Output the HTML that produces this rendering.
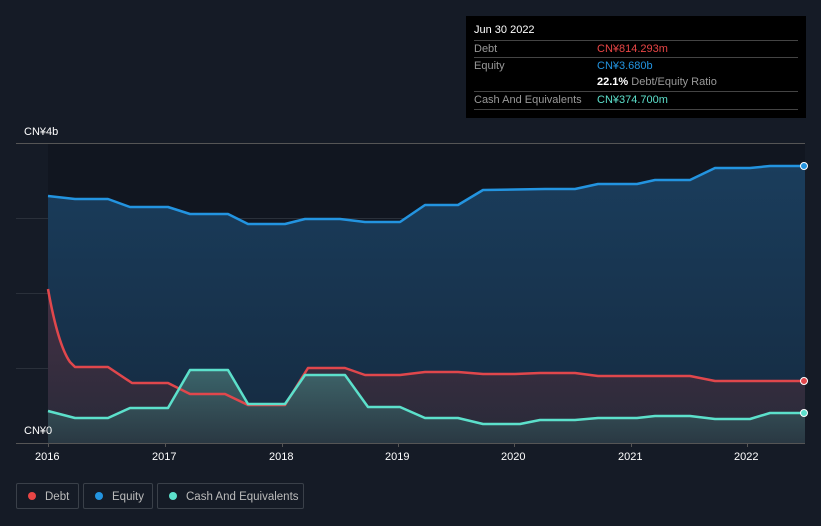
<!DOCTYPE html>
<html><head><meta charset="utf-8"><style>
body{margin:0;width:821px;height:526px;background:#151b26;font-family:"Liberation Sans",sans-serif;overflow:hidden;position:relative}
.tt{position:absolute;left:466px;top:16px;width:340px;height:102px;background:#000;color:#fff;font-size:11px}
.row{position:absolute;left:8px;width:324px;border-top:1px solid #444;height:17px;line-height:17px}
.l{color:#999;position:absolute;left:0}
.v{position:absolute;left:123px}
.leg{position:absolute;top:483px;height:26px;border:1px solid #3a4049;border-radius:2px;color:#bbb;font-size:11.5px;line-height:26px;box-sizing:border-box}
.dot{display:inline-block;width:8px;height:8px;border-radius:50%;margin:0 9px 0 11px;vertical-align:-0px}
.ax{position:absolute;color:#fff;font-size:11px}
</style></head><body>
<svg width="821" height="526" style="position:absolute;left:0;top:0">
<defs>
<linearGradient id="eq" x1="0" y1="0" x2="0" y2="1"><stop offset="0" stop-color="#1a3d5c"/><stop offset="1" stop-color="#152a40"/></linearGradient>
<linearGradient id="db" x1="0" y1="0" x2="0" y2="1"><stop offset="0" stop-color="#4a3043"/><stop offset="1" stop-color="#2a2a38"/></linearGradient>
<linearGradient id="cs" x1="0" y1="0" x2="0" y2="1"><stop offset="0" stop-color="#3f6a6e"/><stop offset="1" stop-color="#2a3a44"/></linearGradient>
</defs>
<rect x="48" y="143" width="757" height="300" fill="#111620"/>
<g stroke="#2a303a" stroke-width="1">
<line x1="16" y1="143.5" x2="805" y2="143.5" stroke="#555"/>
<line x1="16" y1="218.5" x2="805" y2="218.5"/>
<line x1="16" y1="293.5" x2="805" y2="293.5"/>
<line x1="16" y1="368.5" x2="805" y2="368.5"/>
</g>
<path d="M48,196 L75,199 108,199 130,207 168,207 190,214 228,214 248,224 285,224 305,219 340,219 365,222 400,222 425,205 458,205 483,190 545,189 575,189 598,184 637,184 655,180 690,180 715,168 750,168 770,166 805,166 L805,443 48,443Z" fill="url(#eq)"/>
<path d="M48,289 Q58,345 70,362 L75,367 108,367 132,383 168,383 190,394 225,394 248,405 285,405 308,368 345,368 365,375 400,375 425,372 458,372 483,374 515,374 540,373 575,373 598,376 690,376 715,381 770,381 805,381 L805,443 48,443Z" fill="url(#db)" opacity="0.9"/>
<path d="M48,411 L75,418 108,418 130,408 168,408 190,370 228,370 248,404 285,404 305,375 345,375 368,407 400,407 425,418 458,418 483,424 520,424 540,420 575,420 598,418 637,418 655,416 690,416 715,419 750,419 770,413 805,413 L805,443 48,443Z" fill="url(#cs)" opacity="0.9"/>
<g fill="none" stroke-width="2.5" stroke-linejoin="round">
<path d="M48,196 L75,199 108,199 130,207 168,207 190,214 228,214 248,224 285,224 305,219 340,219 365,222 400,222 425,205 458,205 483,190 545,189 575,189 598,184 637,184 655,180 690,180 715,168 750,168 770,166 805,166" stroke="#2394e0"/>
<path d="M48,289 Q58,345 70,362 L75,367 108,367 132,383 168,383 190,394 225,394 248,405 285,405 308,368 345,368 365,375 400,375 425,372 458,372 483,374 515,374 540,373 575,373 598,376 690,376 715,381 770,381 805,381" stroke="#e0474c"/>
<path d="M48,411 L75,418 108,418 130,408 168,408 190,370 228,370 248,404 285,404 305,375 345,375 368,407 400,407 425,418 458,418 483,424 520,424 540,420 575,420 598,418 637,418 655,416 690,416 715,419 750,419 770,413 805,413" stroke="#5ce0cb"/>
</g>
<line x1="16" y1="443.5" x2="805" y2="443.5" stroke="#555"/>
<g stroke="#555"><line x1="48.5" y1="443" x2="48.5" y2="447"/><line x1="165.5" y1="443" x2="165.5" y2="447"/><line x1="282.5" y1="443" x2="282.5" y2="447"/><line x1="398.5" y1="443" x2="398.5" y2="447"/><line x1="514.5" y1="443" x2="514.5" y2="447"/><line x1="631.5" y1="443" x2="631.5" y2="447"/><line x1="747.5" y1="443" x2="747.5" y2="447"/></g>
<circle cx="804" cy="166" r="3.5" fill="#2394e0" stroke="#fff" stroke-width="1"/>
<circle cx="804" cy="381" r="3.5" fill="#e0474c" stroke="#fff" stroke-width="1"/>
<circle cx="804" cy="413" r="3.5" fill="#5ce0cb" stroke="#fff" stroke-width="1"/>
</svg>
<div class="ax" style="left:24px;top:126px">CN¥4b</div>
<div class="ax" style="left:24px;top:425px">CN¥0</div>
<div class="ax" style="left:35px;top:451px">2016</div>
<div class="ax" style="left:152px;top:451px">2017</div>
<div class="ax" style="left:269px;top:451px">2018</div>
<div class="ax" style="left:385px;top:451px">2019</div>
<div class="ax" style="left:501px;top:451px">2020</div>
<div class="ax" style="left:618px;top:451px">2021</div>
<div class="ax" style="left:734px;top:451px">2022</div>
<div class="tt">
<div style="position:absolute;left:8px;top:8px">Jun 30 2022</div>
<div class="row" style="top:24px"><span class="l">Debt</span><span class="v" style="color:#e84545">CN¥814.293m</span></div>
<div class="row" style="top:41px"><span class="l">Equity</span><span class="v" style="color:#2394e0">CN¥3.680b</span></div>
<div class="row" style="top:58px;border-top:none"><span class="v"><b>22.1%</b> <span style="color:#999">Debt/Equity Ratio</span></span></div>
<div class="row" style="top:75px"><span class="l">Cash And Equivalents</span><span class="v" style="color:#5ce0cb">CN¥374.700m</span></div>
<div class="row" style="top:93px;height:0"></div>
</div>
<div class="leg" style="left:16px;width:63px"><span class="dot" style="background:#e84545"></span>Debt</div>
<div class="leg" style="left:83px;width:70px"><span class="dot" style="background:#2394e0"></span>Equity</div>
<div class="leg" style="left:157px;width:147px"><span class="dot" style="background:#5ce0cb"></span>Cash And Equivalents</div>
</body></html>
